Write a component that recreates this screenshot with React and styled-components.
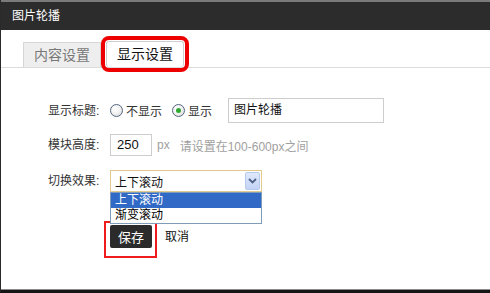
import styled, { createGlobalStyle } from "styled-components";

const GlobalStyle = createGlobalStyle`
  html, body {
    margin: 0;
    padding: 0;
    background: #fff;
  }
  body {
    font-family: "Liberation Sans", "Noto Sans CJK SC", sans-serif;
    font-size: 12px;
    color: #333;
  }
`;

const Window = styled.div`
  width: 490px;
  height: 293px;
  box-sizing: border-box;
  display: flex;
  flex-direction: column;
  border-left: 1px solid #2a2a2a;
  border-bottom: 3px solid #151515;
  background: #fff;
  overflow: hidden;
`;

const TitleBar = styled.div`
  height: 28px;
  border-top: 2px solid #7a7a7a;
  background: #2c2c2c;
  color: #fff;
  font-size: 12px;
  line-height: 28px;
  padding-left: 11px;
`;

const Body = styled.div`
  flex: 1;
  border-bottom: 1px solid #8a8a8a;
  padding-top: 11px;
`;

const TabBar = styled.div`
  display: flex;
  align-items: flex-end;
  gap: 5px;
  height: 26px;
  padding-left: 22px;
  border-bottom: 1px solid #dcdcdc;
`;

const Tab = styled.div`
  box-sizing: border-box;
  height: ${(p) => (p.$active ? 26 : 25)}px;
  padding: 0 10px;
  border: 1px solid ${(p) => (p.$active ? "#cfcfcf" : "#d6d6d6")};
  border-bottom: none;
  background: ${(p) => (p.$active ? "#fff" : "#eeeeee")};
  color: ${(p) => (p.$active ? "#111" : "#777")};
  font-size: 14px;
  line-height: ${(p) => (p.$active ? 25 : 24)}px;
  ${(p) =>
    p.$marked &&
    `
    border-radius: 3px;
    outline: 4px solid #ee0000;
    outline-offset: 1px;
  `}
`;

const Form = styled.div`
  padding: 30px 0 0 47px;
`;

const Row = styled.div`
  display: flex;
  align-items: center;
  height: ${(p) => p.$h}px;
  margin-top: ${(p) => p.$top}px;
`;

const Label = styled.div`
  width: 62px;
  color: #333;
  font-size: 12px;
  line-height: 16px;
`;

const RadioItem = styled.label`
  display: flex;
  align-items: center;
  gap: 3px;
  margin-right: ${(p) => p.$space}px;
  color: #333;
  font-size: 12px;
`;

const RadioCircle = styled.span`
  position: relative;
  width: 13px;
  height: 13px;
  box-sizing: border-box;
  border-radius: 50%;
  border: 1px solid #55667f;
  background: radial-gradient(circle at 40% 35%, #ffffff 0%, #f3f3f3 45%, #d4d4d4 100%);

  &::after {
    content: "";
    display: ${(p) => (p.$checked ? "block" : "none")};
    position: absolute;
    left: 3px;
    top: 3px;
    width: 5px;
    height: 5px;
    border-radius: 50%;
    background: #2fa82f;
  }
`;

const TextInput = styled.div`
  box-sizing: border-box;
  width: ${(p) => p.$w}px;
  height: ${(p) => p.$h}px;
  border: 1px solid #cdcdcd;
  padding-left: ${(p) => p.$pad}px;
  font-size: ${(p) => p.$fs}px;
  line-height: ${(p) => p.$h - 2}px;
  color: #111;
`;

const Hint = styled.span`
  color: #a0a0a0;
  font-size: 12px;
  margin-left: ${(p) => p.$left}px;
`;

const SelectWrap = styled.div`
  position: relative;
`;

const SelectBox = styled.div`
  box-sizing: border-box;
  width: 152px;
  height: 22px;
  border: 1px solid #e2c98e;
  padding-left: 4px;
  display: flex;
  align-items: center;
  justify-content: space-between;
  font-size: 12px;
  color: #111;
`;

const ArrowButton = styled.span`
  width: 15px;
  height: 18px;
  margin-right: 1px;
  box-sizing: border-box;
  border: 1px solid #b8c9ee;
  border-radius: 2px;
  background: linear-gradient(#e0e8fb, #c3d3f5);
  display: flex;
  align-items: center;
  justify-content: center;
`;

const OptionList = styled.div`
  position: absolute;
  top: 22px;
  left: 0;
  z-index: 2;
  width: 152px;
  box-sizing: border-box;
  border: 1px solid #7f9db9;
  background: #fff;
`;

const Option = styled.div`
  height: 15px;
  line-height: 15px;
  padding-left: 4px;
  font-size: 12px;
  background: ${(p) => (p.$selected ? "#3169c6" : "#fff")};
  color: ${(p) => (p.$selected ? "#fff" : "#000")};
`;

const Actions = styled.div`
  display: flex;
  align-items: flex-start;
  margin-top: 29px;
  padding-left: 56px;
`;

const Marker = styled.div`
  border: 2px solid #ee1c1c;
  padding: 2px 3px 8px 4px;
`;

const SaveButton = styled.button`
  width: 42px;
  height: 23px;
  padding: 0;
  border: none;
  border-radius: 2px;
  background: #2b2b2b;
  color: #fff;
  font-family: inherit;
  font-size: 13px;
`;

const CancelLink = styled.span`
  margin: 8px 0 0 8px;
  color: #111;
  font-size: 12px;
  line-height: 16px;
`;

export default function App() {
  return (
    <Window>
      <GlobalStyle />
      <TitleBar>图片轮播</TitleBar>
      <Body>
        <TabBar>
          <Tab>内容设置</Tab>
          <Tab $active $marked>显示设置</Tab>
        </TabBar>
        <Form>
          <Row $h={25} $top={0}>
            <Label>显示标题:</Label>
            <RadioItem $space={10}>
              <RadioCircle />
              不显示
            </RadioItem>
            <RadioItem $space={16}>
              <RadioCircle $checked />
              显示
            </RadioItem>
            <TextInput $w={156} $h={25} $pad={5} $fs={12}>图片轮播</TextInput>
          </Row>
          <Row $h={22} $top={11}>
            <Label>模块高度:</Label>
            <TextInput $w={42} $h={22} $pad={6} $fs={13}>250</TextInput>
            <Hint $left={5}>px</Hint>
            <Hint $left={10}>请设置在100-600px之间</Hint>
          </Row>
          <Row $h={22} $top={14}>
            <Label>切换效果:</Label>
            <SelectWrap>
              <SelectBox>
                上下滚动
                <ArrowButton>
                  <svg width="9" height="6" viewBox="0 0 9 6">
                    <path d="M1 1 L4.5 4.5 L8 1" fill="none" stroke="#4d6185" strokeWidth="1.8" />
                  </svg>
                </ArrowButton>
              </SelectBox>
              <OptionList>
                <Option $selected>上下滚动</Option>
                <Option>渐变滚动</Option>
              </OptionList>
            </SelectWrap>
          </Row>
          <Actions>
            <Marker>
              <SaveButton>保存</SaveButton>
            </Marker>
            <CancelLink>取消</CancelLink>
          </Actions>
        </Form>
      </Body>
    </Window>
  );
}
